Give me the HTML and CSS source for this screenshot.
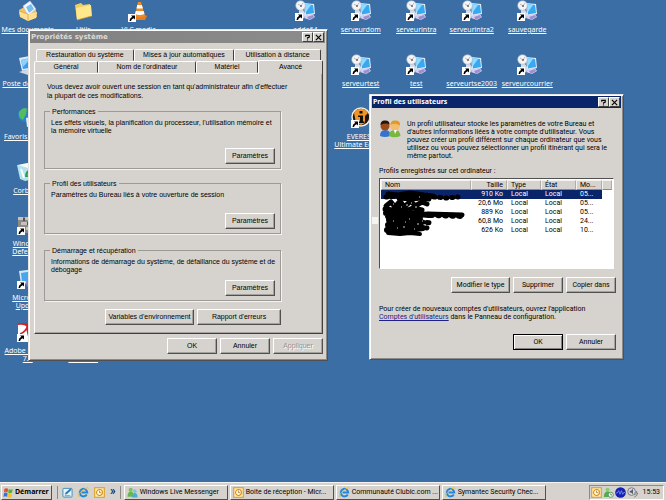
FILE: index.html
```html
<!DOCTYPE html>
<html lang="fr">
<head>
    <meta charset="UTF-8">
    <meta name="viewport" content="width=device-width, initial-scale=1.0">
    <title>Bureau</title>
    <!-- Stylesheet -->
    <link rel="stylesheet" href="styles.css">
</head>
<body>
    <!-- Icons -->
    <svg class="sprite" aria-hidden="true">
        <symbol id="arrow" viewBox="0 0 8 8">
            <rect width="8" height="8" fill="#fff"/>
            <path d="M3 1.500h4v4L5.700 4.200Q3.500 5 3 7H1.500Q1.500 4 4.300 2.800z" fill="#000"/>
        </symbol>
        <symbol id="server" viewBox="0 0 22 22">
            <path d="M10 3l10 1 1 10-10 2z" fill="#e4eef8"/>
            <path d="M11 4l8 1 1 8-8 1.500z" fill="#38a8f0"/>
            <path d="M11 4l6 1-5 7z" fill="#8edcff"/>
            <path d="M12 15l7-1 2 3-5 3-6-2z" fill="#d8d0f0"/>
            <path d="M13 17l6-2 1 2-5 3z" fill="#9a90d0"/>
            <path d="M5 9l3-1 4 7-3 4-4-1z" fill="#d6dce8"/>
            <circle cx="6.500" cy="5.500" r="4.800" fill="#f4f4f4" stroke="#aab4c4" stroke-width=".6"/>
            <path d="M4 4l3 2 2-3" fill="none" stroke="#a4acb8" stroke-width=".8"/>
            <circle cx="7" cy="6" r="1" fill="#666"/>
            <use href="#arrow" x="1" y="13" width="8" height="8"/>
        </symbol>
        <symbol id="docs" viewBox="0 0 22 22">
            <path d="M2 10l7-4 10 4 1 7-9 4-8-5z" fill="#f4c25c"/>
            <path d="M6 6l7-5 6 8-8 7z" fill="#f6f9fd" stroke="#9cc0e0" stroke-width=".6"/>
            <path d="M9 7l5-3 3 5-5 4z" fill="#78bdf0"/>
            <path d="M2 11l9 3 9-2-1 6-8 3-8-4z" fill="#ffe093"/>
            <path d="M2 11l9 3v7" fill="none" stroke="#d89a38" stroke-width=".7"/>
        </symbol>
        <symbol id="folder" viewBox="0 0 22 22">
            <path d="M3 5l6-2 2 2 7-1 1 12-14 4z" fill="#f2cf5a"/>
            <path d="M4 8l15-3 1 11-15 4z" fill="#ffe88c"/>
            <path d="M5 20l15-4" stroke="#b98e2c" stroke-width=".8"/>
        </symbol>
        <symbol id="vlc" viewBox="0 0 22 22">
            <path d="M4 16l4-2h7l4 2-2 4H6z" fill="#e87d20"/>
            <path d="M10 2h3l4 14q-5 3-10 0z" fill="#f08a24"/>
            <path d="M9.200 5h4.700l1 3.500H8.500zM7.700 11h8l.8 3q-5 2-9.500 0z" fill="#fff"/>
            <use href="#arrow" x="0" y="14" width="8" height="8"/>
        </symbol>
        <symbol id="computer" viewBox="0 0 22 22">
            <path d="M2 4l16-3 2 13-15 3z" fill="#dce9f6"/>
            <path d="M4 6l13-3 1 10-12 2z" fill="#3c9cec"/>
            <path d="M4 6l10-2-8 9z" fill="#8ad2ff"/>
            <path d="M2 18l10-3 8 2-9 4z" fill="#d3d7e6"/>
        </symbol>
        <symbol id="network" viewBox="0 0 22 22">
            <circle cx="8" cy="8" r="7" fill="#2784cf"/>
            <path d="M2 5q5-6 8-3l-1 5-3 6Q1 11 2 5z" fill="#54bc5c"/>
            <path d="M9 11l10-2 1 9-10 2z" fill="#e8eef6"/>
            <path d="M11 12l7-1 1 6-7 1z" fill="#4aa8ec"/>
        </symbol>
        <symbol id="ie" viewBox="0 0 22 22">
            <path d="M17.500 15A7.500 7.500 0 1 1 18.500 11H7" fill="none" stroke="#2488d8" stroke-width="4"/>
            <path d="M2 20Q-1 15 9 7T21 3" fill="none" stroke="#e8b838" stroke-width="1.800"/>
        </symbol>
        <symbol id="bin" viewBox="0 0 22 22">
            <path d="M0 4l19-1-3 15-8 2-5-2z" fill="#b4e2ec"/>
            <path d="M1 4l9-2 9 1-8 4z" fill="#f2fcfc"/>
            <path d="M4 8l3 9" stroke="#fff" stroke-width="2"/>
            <path d="M8 16q0-6 4-7l-1-2 4 2-2 4-1-2q-2 1-1 5z" fill="#2c9c4c"/>
        </symbol>
        <symbol id="wall" viewBox="0 0 22 22">
            <path d="M1 3h18v16H1z" fill="#8c8c8c"/>
            <path d="M1 3h5v3H1zM8 3h6v3H8zM4 8h6v3H4zM12 8h6v3h-6zM1 13h6v3H1zM9 13h7v3H9z" fill="#c9c2b8"/>
            <path d="M6 4h2v3H6zM10 8h2v3h-2z" fill="#555"/>
            <use href="#arrow" x="0" y="13" width="8" height="8"/>
        </symbol>
        <symbol id="update" viewBox="0 0 22 22">
            <path d="M2 3l16-2 2 13-16 2z" fill="#d4e8fa"/>
            <path d="M4 5l12-2 1 9-12 2z" fill="#48a6ec"/>
            <circle cx="14" cy="15" r="5" fill="#8d80cc"/>
            <use href="#arrow" x="0" y="13" width="8" height="8"/>
        </symbol>
        <symbol id="pdf" viewBox="0 0 22 22">
            <path d="M1 2h17l3 3v16H1z" fill="#fff"/>
            <path d="M1 2h20v16h-8q1-8-2-11Q8 3 1 4z" fill="#d3242c"/>
            <path d="M3 13q6-2 8-9M10 3q0 8 3 17" fill="none" stroke="#d3242c" stroke-width="1.800"/>
            <path d="M13 4q-1 8 5 14" fill="none" stroke="#fff" stroke-width="1.300"/>
            <use href="#arrow" x="0" y="13" width="8" height="8"/>
        </symbol>
        <symbol id="everest" viewBox="0 0 22 22">
            <circle cx="11" cy="10" r="9" fill="#1c1512" stroke="#f1ece4" stroke-width="1.500"/>
            <path d="M4 6a8 8 0 0 1 14 0l-3 3v7l-4 2-5-2z" fill="#f09424"/>
            <path d="M9.500 4h3v2.500h-3zM8 8.500h5v6h1.500V16h-6v-1.500H10V10H8z" fill="#14100c"/>
            <use href="#arrow" x="1" y="13" width="8" height="8"/>
        </symbol>
        <symbol id="users" viewBox="0 0 22 18">
            <path d="M1 16q0-6 5-6 4 0 5 3v3q-5 2-10 0z" fill="#2f74d0"/>
            <circle cx="6" cy="6" r="4.500" fill="#9c4c1c"/>
            <path d="M1.500 5q0-5 5-4.500 4 0 4 4-4-2-9 .5z" fill="#24140c"/>
            <path d="M10 16q0-6 6-6 5 0 5.500 6-6 2.500-11.500 0z" fill="#78b83c"/>
            <circle cx="16" cy="6" r="4.700" fill="#f4bc6c"/>
            <path d="M11.500 5q0-5 5-4.500 5 0 4.500 5-5-3-9.500-.5z" fill="#e09a28"/>
            <path d="M15 10l1 4 2-4z" fill="#fff"/>
        </symbol>
        <symbol id="flag" viewBox="0 0 12 12">
            <path d="M1.500 2q2-1.500 4 0L5 6Q3 4.500 1 6z" fill="#e4502c"/>
            <path d="M6.200 2.200q2 1.500 4.300 0L10 6Q8 7.500 5.700 6.200z" fill="#5cac38"/>
            <path d="M1 6.800q2-1.500 4 0l-.5 4q-2-1.500-4 0z" fill="#3c70d8"/>
            <path d="M5.600 7q2 1.500 4.200 0l-.5 4q-2 1.500-4.200 0z" fill="#f4c02c"/>
        </symbol>
        <symbol id="showdesk" viewBox="0 0 12 12">
            <rect x="1" y="1.500" width="10" height="9.500" rx="1" fill="#e6f3fb" stroke="#3d8ab8"/>
            <path d="M3 8.500l1-2.500 5-4.500 1.500 1.500-5 4.700z" fill="#2c7cb4"/>
            <path d="M3 9.500h6" stroke="#5c9cc4"/>
        </symbol>
        <symbol id="outlook" viewBox="0 0 12 12">
            <rect x=".8" y=".8" width="10.400" height="10.400" fill="#fdf0c0" stroke="#e09c20" stroke-width="1.200"/>
            <circle cx="6" cy="6" r="3.200" fill="#fffbe8" stroke="#d88c14" stroke-width="1.200"/>
            <path d="M6 4v2.200h1.800" fill="none" stroke="#a4680c" stroke-width=".8"/>
        </symbol>
        <symbol id="messenger" viewBox="0 0 12 12">
            <circle cx="4" cy="3" r="2.200" fill="#7cc45c"/>
            <path d="M.5 10.500Q1 5 4 5t4 5.500z" fill="#66b84c"/>
            <circle cx="8.500" cy="4.500" r="2" fill="#7cc8dc"/>
            <path d="M5.500 11.500q0-5 3-5t3 5z" fill="#50acc8"/>
        </symbol>
        <symbol id="buddy" viewBox="0 0 12 12">
            <circle cx="5" cy="3" r="2.200" fill="#88cc78"/>
            <path d="M1 11q0-6 4-6t4 6z" fill="#54ac4c"/>
            <circle cx="8.500" cy="8.500" r="2.800" fill="#eef4ee" stroke="#58965c"/>
            <path d="M8.500 7v1.700h1.500" fill="none" stroke="#444" stroke-width=".7"/>
        </symbol>
        <symbol id="wave" viewBox="0 0 12 12">
            <circle cx="6" cy="6" r="5.800" fill="#1420b4"/>
            <path d="M1 6.500h1.500L4 4l1.500 4L7 4l1.500 4L9.500 6H11" fill="none" stroke="#8c9cf0" stroke-width=".8"/>
        </symbol>
        <symbol id="sound" viewBox="0 0 12 12">
            <circle cx="5" cy="5" r="4.200" fill="#d6d8dc" stroke="#73777f"/>
            <path d="M3 4h1.500l2-2v6l-2-2H3z" fill="#555b66"/>
            <path d="M8.500 8.500q2-1 2-4M8 11q3-1 4-5" fill="none" stroke="#6c7078"/>
        </symbol>
    </svg>

    <main class="desktop">
        <!-- First column -->
        <a href="#" class="shortcut c1 r1"><svg><use href="#docs"/></svg><span>Mes documents</span></a>
        <a href="#" class="shortcut c1 r2"><svg><use href="#computer"/></svg><span>Poste de travail</span></a>
        <a href="#" class="shortcut c1 r3"><svg><use href="#network"/></svg><span>Favoris réseau</span></a>
        <a href="#" class="shortcut c1 r4"><svg><use href="#bin"/></svg><span>Corbeille</span></a>
        <a href="#" class="shortcut c1 r5"><svg><use href="#wall"/></svg><span>Windows<br>Defender</span></a>
        <a href="#" class="shortcut c1 r6"><svg><use href="#update"/></svg><span>Microsoft<br>Update</span></a>
        <a href="#" class="shortcut c1 r7"><svg><use href="#pdf"/></svg><span>Adobe Reader<br>7.0</span></a>
        <a href="#" class="shortcut c2 r1"><svg><use href="#folder"/></svg><span>Utils</span></a>
        <a href="#" class="shortcut c2 r7"><svg><use href="#folder"/></svg><span>Nouveau<br>dossier 2</span></a>
        <a href="#" class="shortcut c3 r1"><svg><use href="#vlc"/></svg><span>VLC media</span></a>
        <!-- Servers -->
        <a href="#" class="shortcut c6 r1"><svg><use href="#server"/></svg><span>adda64</span></a>
        <a href="#" class="shortcut c7 r1"><svg><use href="#server"/></svg><span>serveurdom</span></a>
        <a href="#" class="shortcut c8 r1"><svg><use href="#server"/></svg><span>serveurintra</span></a>
        <a href="#" class="shortcut c9 r1"><svg><use href="#server"/></svg><span>serveurintra2</span></a>
        <a href="#" class="shortcut c10 r1"><svg><use href="#server"/></svg><span>sauvegarde</span></a>
        <a href="#" class="shortcut c7 r2"><svg><use href="#server"/></svg><span>serveurtest</span></a>
        <a href="#" class="shortcut c8 r2"><svg><use href="#server"/></svg><span>test</span></a>
        <a href="#" class="shortcut c9 r2"><svg><use href="#server"/></svg><span>serveurtse2003</span></a>
        <a href="#" class="shortcut c10 r2"><svg><use href="#server"/></svg><span>serveurcourrier</span></a>
        <a href="#" class="shortcut c7 r3"><svg><use href="#everest"/></svg><span>EVEREST<br>Ultimate Edition</span></a>

        <!-- System properties -->
        <section class="window system">
            <header class="titlebar inactive">
                <h2>Propriétés système</h2>
                <button type="button" aria-label="Aide"><svg viewBox="0 0 8 8"><path d="M2 3V1.500h4V3.500L4 4.500V5.500M4 6.300v1.200" class="stroke"/></svg></button>
                <button type="button" aria-label="Fermer"><svg viewBox="0 0 8 8"><path d="M1 1l6 6M7 1L1 7" class="stroke"/></svg></button>
            </header>
            <div class="tabs back" role="tablist">
                <button type="button" role="tab" class="w98">Restauration du système</button>
                <button type="button" role="tab" class="w101">Mises à jour automatiques</button>
                <button type="button" role="tab" class="w87">Utilisation à distance</button>
            </div>
            <div class="tabs front" role="tablist">
                <button type="button" role="tab" class="w64">Général</button>
                <button type="button" role="tab" class="w98">Nom de l'ordinateur</button>
                <button type="button" role="tab" class="w62">Matériel</button>
                <button type="button" role="tab" class="selected" aria-selected="true">Avancé</button>
            </div>
            <div class="panel">
                <p class="intro">Vous devez avoir ouvert une session en tant qu'administrateur afin d'effectuer<br>la plupart de ces modifications.</p>
                <fieldset class="tall">
                    <legend>Performances</legend>
                    <div class="group">
                        <p>Les effets visuels, la planification du processeur, l'utilisation mémoire et<br>la mémoire virtuelle</p>
                        <button type="button" class="btn">Paramètres</button>
                    </div>
                </fieldset>
                <fieldset>
                    <legend>Profil des utilisateurs</legend>
                    <div class="group">
                        <p>Paramètres du Bureau liés à votre ouverture de session</p>
                        <button type="button" class="btn">Paramètres</button>
                    </div>
                </fieldset>
                <fieldset>
                    <legend>Démarrage et récupération</legend>
                    <div class="group">
                        <p>Informations de démarrage du système, de défaillance du système et de<br>débogage</p>
                        <button type="button" class="btn">Paramètres</button>
                    </div>
                </fieldset>
                <div class="extra">
                    <button type="button" class="btn wide">Variables d'environnement</button>
                    <button type="button" class="btn wide">Rapport d'erreurs</button>
                </div>
            </div>
            <footer class="actions">
                <button type="button" class="btn">OK</button>
                <button type="button" class="btn">Annuler</button>
                <button type="button" class="btn" disabled>Appliquer</button>
            </footer>
        </section>

        <!-- User profiles -->
        <section class="window profiles">
            <header class="titlebar">
                <h2>Profil des utilisateurs</h2>
                <button type="button" aria-label="Aide"><svg viewBox="0 0 8 8"><path d="M2 3V1.500h4V3.500L4 4.500V5.500M4 6.300v1.200" class="stroke"/></svg></button>
                <button type="button" aria-label="Fermer"><svg viewBox="0 0 8 8"><path d="M1 1l6 6M7 1L1 7" class="stroke"/></svg></button>
            </header>
            <div class="content">
                <div class="about">
                    <svg><use href="#users"/></svg>
                    <p>Un profil utilisateur stocke les paramètres de votre Bureau et<br>d'autres informations liées à votre compte d'utilisateur. Vous<br>pouvez créer un profil différent sur chaque ordinateur que vous<br>utilisez ou vous pouvez sélectionner un profil itinérant qui sera le<br>même partout.</p>
                </div>
                <p class="caption" id="list-label">Profils enregistrés sur cet ordinateur :</p>
                <div class="list">
                    <table aria-labelledby="list-label">
                        <colgroup>
                            <col class="col-name"><col class="col-size"><col class="col-type"><col class="col-state"><col class="col-date"><col>
                        </colgroup>
                        <thead>
                            <tr><th>Nom</th><th class="num">Taille</th><th>Type</th><th>État</th><th>Mo...</th><th></th></tr>
                        </thead>
                        <tbody>
                            <tr class="active"><td></td><td class="num">910 Ko</td><td>Local</td><td>Local</td><td>05...</td></tr>
                            <tr><td></td><td class="num">20,6 Mo</td><td>Local</td><td>Local</td><td>05...</td></tr>
                            <tr><td></td><td class="num">889 Ko</td><td>Local</td><td>Local</td><td>05...</td></tr>
                            <tr><td></td><td class="num">60,8 Mo</td><td>Local</td><td>Local</td><td>24...</td></tr>
                            <tr><td></td><td class="num">626 Ko</td><td>Local</td><td>Local</td><td>10...</td></tr>
                        </tbody>
                    </table>
                    <!-- Names blacked out by hand -->
                    <svg class="scribble" viewBox="0 0 96 50" aria-hidden="true">
                        <path d="M1 30h6v7H1z" fill="#f4f4f0"/>
                        <g fill="none" stroke="#000" stroke-linecap="round" stroke-linejoin="round">
                            <path d="M17 7l10 1 12-2 14 2 9 1" stroke-width="5"/>
                            <path d="M15 10l16-1 14 2 20-1 10 1 12-1" stroke-width="5" stroke-dasharray="1 5"/>
                            <path d="M28 11l12 1 10-1 8 1" stroke-width="5"/>
                            <path d="M15 19l5-4 4 5 5-6 4 6 7-6 4 5 7-4 5 2M14 22l8 1 6-3 6 4 8-3 9 2" stroke-width="5"/>
                            <path d="M15 26h20l12 1 11 1M17 29l20-1 12 2" stroke-width="6"/>
                            <path d="M57 27l34 1" stroke-width="5"/>
                            <path d="M60 28l32 1" stroke-width="6" stroke-dasharray="1 6"/>
                            <path d="M18 33l10-1 9 2 12-1M17 38l10-1 11 2 11-2M16 43l12-1 10 1 14-2" stroke-width="6"/>
                            <path d="M50 35l10 1M49 40l7 1" stroke-width="5" stroke-dasharray="2 4"/>
                            <path d="M17 46l12 1 10-1 10 1" stroke-width="4"/>
                        </g>
                        <path d="M22 17h1M35 18h2M30 20h1M44 20h2M40 16h1M34 35h1M46 37h2M32 40h2M51 34h1M43 42h1M22 34h1M26 41h1M38 32h1M54 38h1M48 10h1" stroke="#ccc" fill="none"/>
                    </svg>
                </div>
                <div class="actions">
                    <button type="button" class="btn medium">Modifier le type</button>
                    <button type="button" class="btn">Supprimer</button>
                    <button type="button" class="btn">Copier dans</button>
                </div>
                <p class="hint">Pour créer de nouveaux comptes d'utilisateurs, ouvrez l'application<br><a href="#">Comptes d'utilisateurs</a> dans le Panneau de configuration.</p>
                <div class="actions">
                    <button type="button" class="btn default">OK</button>
                    <button type="button" class="btn">Annuler</button>
                </div>
            </div>
        </section>
    </main>

    <!-- Taskbar -->
    <nav class="taskbar">
        <button type="button" class="task start"><svg><use href="#flag"/></svg>Démarrer</button>
        <div class="quick">
            <svg><use href="#showdesk"/></svg>
            <svg><use href="#ie"/></svg>
            <svg><use href="#outlook"/></svg>
            <span>»</span>
        </div>
        <div class="tasks">
            <button type="button" class="task"><svg><use href="#messenger"/></svg>Windows Live Messenger</button>
            <button type="button" class="task"><svg><use href="#outlook"/></svg>Boîte de réception - Micr...</button>
            <button type="button" class="task"><svg><use href="#ie"/></svg>Communauté Clubic.com ...</button>
            <button type="button" class="task"><svg><use href="#ie"/></svg>Symantec Security Chec...</button>
        </div>
        <div class="tray">
            <svg><use href="#outlook"/></svg>
            <svg><use href="#buddy"/></svg>
            <svg><use href="#wave"/></svg>
            <svg><use href="#sound"/></svg>
            <time>15:53</time>
        </div>
    </nav>
</body>
</html>
```

FILE: styles.css
```css
*{
    padding: 0;
    margin: 0;
    box-sizing: border-box;
}
body{
    display: flex;
    flex-direction: column;
    height: 100vh;
    overflow: hidden;
    background-color: #3a6ea5;
    font-family: Roboto, sans-serif;
    font-size: 7px;
    line-height: 8px;
    color: #000000;
}
button{
    font: inherit;
    color: inherit;
    white-space: nowrap;
}
.sprite{
    position: absolute;
    width: 0;
    height: 0;
}

/* Desktop */
.desktop{
    flex: 1;
    position: relative;
    display: grid;
    grid-template-columns: repeat(12, 1fr);
    grid-template-rows: repeat(9, 1fr);
    min-height: 0;
}
.shortcut{
    display: flex;
    flex-direction: column;
    align-items: center;
    gap: 4px;
    min-width: 0;
    min-height: 0;
    color: #ffffff;
    font-family: "Noto Sans", sans-serif;
    text-align: center;
    white-space: nowrap;
}
.shortcut svg{
    flex: none;
    width: 22px;
    height: 22px;
}
.c1{ grid-column: 1; }
.c2{ grid-column: 2; }
.c3{ grid-column: 3; }
.c6{ grid-column: 6; }
.c7{ grid-column: 7; }
.c8{ grid-column: 8; }
.c9{ grid-column: 9; }
.c10{ grid-column: 10; }
.r1{ grid-row: 1; }
.r2{ grid-row: 2; }
.r3{ grid-row: 3; }
.r4{ grid-row: 4; }
.r5{ grid-row: 5; }
.r6{ grid-row: 6; }
.r7{ grid-row: 7; }

/* Windows */
.window{
    position: absolute;
    background-color: #d6d3ce;
    border: 1px solid;
    border-color: #e8e6e2 #505050 #505050 #e8e6e2;
    box-shadow: inset 1px 1px #ffffff, inset -1px -1px #8c8a86;
}
.system{
    left: 28px;
    top: 29px;
    width: 300px;
    padding: 1px 4px 6px 5px;
    font-family: "Liberation Sans", sans-serif;
}
.profiles{
    left: 369px;
    top: 94px;
    width: 255px;
    padding: 1px 2px 9px;
}
.titlebar{
    display: flex;
    align-items: center;
    height: 12px;
    padding: 0 1px;
    background-color: #0a246a;
}
.titlebar h2{
    flex: 1;
    font-family: "Noto Sans", sans-serif;
    font-size: 7px;
    font-weight: 700;
    color: #ffffff;
}
.inactive{
    margin: 0 -2px 0 -4px;
    background: linear-gradient(90deg, #808080, #8c8c8c);
}
.inactive h2{
    font-family: "DejaVu Sans", sans-serif;
    color: #dedbd6;
}
.titlebar button{
    display: grid;
    place-items: center;
    width: 11px;
    height: 10px;
    background-color: #d6d3ce;
    border: 1px solid;
    border-color: #ffffff #404040 #404040 #ffffff;
}
.titlebar button svg{
    width: 7px;
    height: 7px;
}
.stroke{
    fill: none;
    stroke: #000000;
    stroke-width: 1.3;
}

/* Buttons */
.btn{
    width: 50px;
    height: 16px;
    background-color: #d6d3ce;
    border: 1px solid;
    border-color: #ffffff #505050 #505050 #ffffff;
    box-shadow: inset -1px -1px #a4a29e;
}
.btn:disabled{
    color: #949290;
    text-shadow: 1px 1px #ffffff;
}
.default{
    border-color: #000000;
    box-shadow: inset 1px 1px #ffffff, inset -1px -1px #808080;
}
.actions{
    display: flex;
    justify-content: flex-end;
    gap: 3px;
}

/* Tabs */
.tabs{
    display: flex;
}
.tabs button{
    height: 12px;
    background-color: #d6d3ce;
    border: 1px solid;
    border-color: #ffffff #404040 transparent #ffffff;
    border-radius: 2px 2px 0 0;
}
.back{
    margin: 6px 2px 0;
}
.front .selected{
    flex: 1;
    height: 14px;
    margin: -1px 0 -1px;
    position: relative;
    border-bottom: none;
    padding-bottom: 2px;
}
.w62{ width: 62px; }
.w64{ width: 64px; }
.w87{ width: 87px; }
.w98{ width: 98px; }
.w101{ width: 101px; }
.panel{
    padding: 8px 41px 8px 9px;
    border: 1px solid;
    border-color: #ffffff #404040 #404040 #ffffff;
    box-shadow: inset -1px -1px #a4a29e;
    margin-bottom: 4px;
}
.intro{
    padding-left: 3px;
    margin-bottom: 7px;
    line-height: 9px;
    white-space: nowrap;
}
fieldset{
    min-width: 0;
    height: 55px;
    margin-bottom: 12px;
    padding: 0 5px 4px;
    border: 1px solid #9c9a96;
    box-shadow: 1px 1px #f4f2ee;
}
fieldset.tall{
    height: 62px;
    margin-bottom: 10px;
}
legend{
    padding: 0 2px;
    line-height: 9px;
}
.group{
    display: flex;
    flex-direction: column;
    justify-content: space-between;
    align-items: flex-end;
    height: 100%;
}
.group p{
    align-self: stretch;
    padding: 3px 1px 0;
    white-space: nowrap;
}
.extra{
    display: flex;
    justify-content: flex-end;
    gap: 3px;
    margin-top: -4px;
}
.extra .wide{
    width: 84px;
}
.extra .wide:first-child{
    width: 89px;
}

/* Profile window */
.content{
    padding: 12px 5px 0 7px;
}
.about{
    display: flex;
    gap: 6px;
    margin-bottom: 7px;
}
.about svg{
    flex: none;
    width: 22px;
    height: 18px;
}
.about p,
.hint{
    white-space: nowrap;
}
.caption{
    margin-bottom: 3px;
}
.list{
    position: relative;
    height: 91px;
    margin: 0 2px 8px 0;
    padding: 1px;
    background-color: #ffffff;
    border: 1px solid;
    border-color: #505050 #ffffff #ffffff #505050;
}
table{
    width: 100%;
    table-layout: fixed;
    border-collapse: separate;
    border-spacing: 0;
}
.col-name{ width: 90px; }
.col-size{ width: 36px; }
.col-type{ width: 34px; }
.col-state{ width: 35px; }
.col-date{ width: 26px; }
th{
    height: 10px;
    padding: 0 3px;
    background-color: #d6d3ce;
    border: 1px solid;
    border-color: #f4f2ee #b0ada8 #8c8a86 #f4f2ee;
    font-weight: 400;
    line-height: 8px;
    text-align: left;
    white-space: nowrap;
}
td{
    height: 9px;
    padding: 0 4px;
    line-height: 9px;
    white-space: nowrap;
}
.num{
    text-align: right;
}
.active td{
    background-color: #0a246a;
    color: #ffffff;
}
.scribble{
    position: absolute;
    left: -9px;
    top: 8px;
    width: 96px;
    height: 50px;
}
.profiles .actions{
    gap: 3px;
}
.profiles .medium{
    width: 59px;
}
.hint{
    margin: 12px 0 13px;
}
.hint a{
    color: #20208c;
}

/* Taskbar */
.taskbar{
    display: flex;
    align-items: center;
    height: 18px;
    padding: 1px 2px 0 1px;
    background-color: #d6d3ce;
    border-top: 1px solid #f4f2ee;
}
.taskbar svg{
    flex: none;
    width: 11px;
    height: 11px;
}
.task{
    display: flex;
    align-items: center;
    gap: 2px;
    width: 104px;
    height: 15px;
    padding: 0 2px;
    background-color: #d6d3ce;
    border: 1px solid;
    border-color: #ffffff #505050 #505050 #ffffff;
    overflow: hidden;
}
.start{
    gap: 1px;
    width: 51px;
    padding: 0 1px;
    font-family: "Noto Sans", sans-serif;
    font-weight: 700;
}
.quick{
    display: flex;
    align-items: center;
    gap: 5px;
    height: 13px;
    margin: 0 3px 0 5px;
    padding: 0 4px;
    border-left: 1px solid #8c8a86;
    border-right: 1px solid #8c8a86;
}
.quick span{
    font-size: 12px;
    padding-bottom: 2px;
}
.tasks{
    flex: 1;
    display: flex;
    gap: 2px;
}
.tray{
    display: flex;
    align-items: center;
    gap: 1px;
    height: 15px;
    padding: 0 3px 0 1px;
    border: 1px solid;
    border-color: #8c8a86 #ffffff #ffffff #8c8a86;
}
.tray time{
    margin-left: 4px;
}
```
